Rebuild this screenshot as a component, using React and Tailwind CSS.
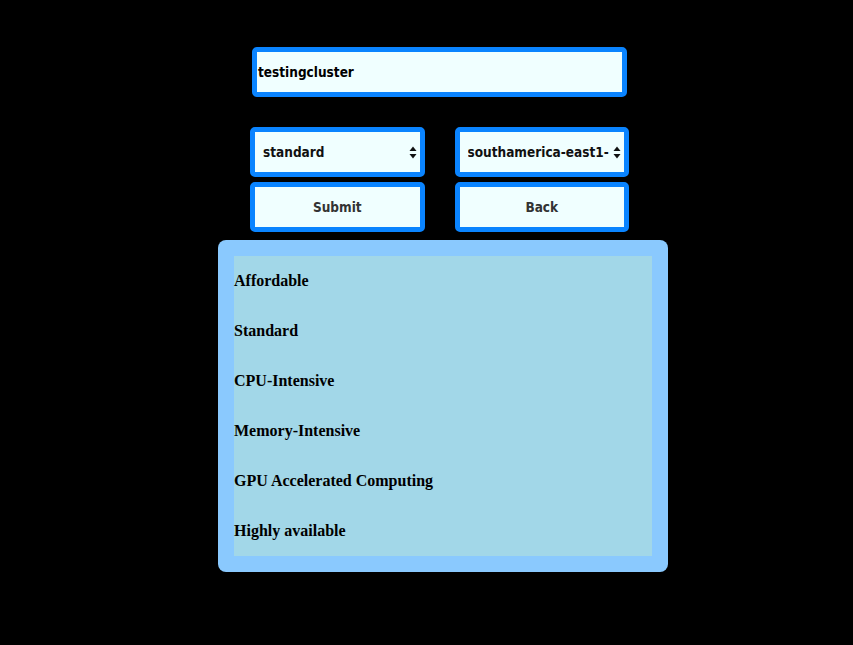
import React from 'react';

const tiers = [
  'Affordable',
  'Standard',
  'CPU-Intensive',
  'Memory-Intensive',
  'GPU Accelerated Computing',
  'Highly available',
];

function Arrows() {
  return (
    <svg width="8" height="13" viewBox="0 0 8 13" className="shrink-0">
      <path d="M4 0.5 L7.5 5 L0.5 5 Z" fill="#111" />
      <path d="M4 12.5 L7.5 8 L0.5 8 Z" fill="#111" />
    </svg>
  );
}

function Select({ value }) {
  return (
    <div className="h-[50px] border-[5px] border-[#0a84ff] rounded-[5px] bg-[#f0ffff] flex items-center pl-2 pr-[3px]">
      <span className="flex-1 min-w-0 overflow-hidden whitespace-nowrap text-[13.5px] font-bold text-[#111]">
        {value}
      </span>
      <Arrows />
    </div>
  );
}

function Button({ label }) {
  return (
    <button className="h-[50px] border-[5px] border-[#0a84ff] rounded-[5px] bg-[#f0ffff] text-[13.5px] font-bold text-[#333]">
      {label}
    </button>
  );
}

export default function App() {
  const font = { fontFamily: '"DejaVu Sans Condensed", "DejaVu Sans", sans-serif' };

  return (
    <div className="min-h-[645px] bg-black pt-[47px]" style={font}>
      <div className="ml-[218px] w-[450px] flex flex-col">
        <div className="ml-[34px] w-[375px] h-[50px] border-[5px] border-[#0a84ff] rounded-[5px] bg-[#f0ffff] flex items-center pl-[1px]">
          <span className="text-[13.5px] font-bold text-black">testingcluster</span>
        </div>

        <div className="ml-[32px] w-[379px] mt-[30px] grid grid-cols-2 gap-x-[30px] gap-y-[5px]">
          <Select value="standard" />
          <Select value="southamerica-east1-" />
          <Button label="Submit" />
          <Button label="Back" />
        </div>

        <div className="mt-[8px] bg-[#8ac9fe] rounded-[8px] p-4">
          <div className="bg-[#a2d7e8]">
            {tiers.map((t) => (
              <div
                key={t}
                className="h-[50px] flex items-center text-[16px] font-bold text-black"
                style={{ fontFamily: '"Liberation Serif", serif' }}
              >
                {t}
              </div>
            ))}
          </div>
        </div>
      </div>
    </div>
  );
}
